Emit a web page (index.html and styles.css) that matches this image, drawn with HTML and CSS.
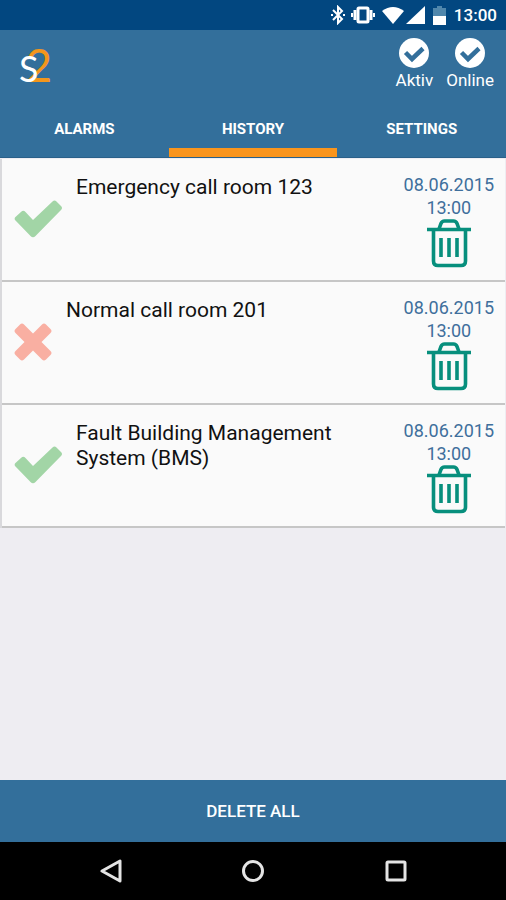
FILE: index.html
```html
<!DOCTYPE html>
<html lang="en">
<head>
<meta charset="utf-8">
<meta name="viewport" content="width=device-width, initial-scale=1">
<title>S2 History</title>
<link rel="stylesheet" href="styles.css">
</head>
<body>
<svg class="defs" aria-hidden="true">
  <symbol id="check" viewBox="0 0 48 38">
    <path d="M2 16.500 7.500 11.500Q9.500 10 11.500 12L19 20 38.500 1.500Q40.500-.5 42.500 1.500L47 6Q49 8 47 10L21.500 36Q19 38.500 16.500 36L1.500 20.500Q-.5 18.500 2 16.500Z"/>
  </symbol>
  <symbol id="cross" viewBox="0 0 38 38">
    <path d="M6 1.500Q8-.5 10 1.500L19 10.500 28 1.500Q30-.5 32 1.500L36.500 6Q38.500 8 36.500 10L27.500 19 36.500 28Q38.500 30 36.500 32L32 36.500Q30 38.500 28 36.500L19 27.500 10 36.500Q8 38.500 6 36.500L1.500 32Q-.5 30 1.500 28L10.500 19 1.500 10Q-.5 8 1.500 6Z"/>
  </symbol>
  <symbol id="trash" viewBox="0 0 44 49">
    <g fill="none" stroke="currentColor" stroke-width="3.600">
      <path d="M0 10.500H44"/>
      <path d="M12 10 14 4.500Q15 2 17.500 2H26.500Q29 2 30 4.500L32 10"/>
      <path d="M6.500 11V42Q6.500 46.500 11 46.500H34Q38.500 46.500 38.500 42V11"/>
      <path d="M14 19V38M22 19V38M30 19V38"/>
    </g>
  </symbol>
  <symbol id="badge" viewBox="0 0 30 30">
    <circle cx="15" cy="15" r="15" fill="#fff"/>
    <path d="M6.500 14.500 13 21 24 10.500" fill="none" stroke="#336f9b" stroke-width="4.500"/>
  </symbol>
</svg>
<div class="screen">
  <div class="status">
    <svg width="14" height="20" viewBox="0 0 14 20" fill="none" stroke="#fff" stroke-width="2"><path d="M2 5 11 14 7 18V2L11 6 2 15"/><path d="M13 9V11M1 9V11"/></svg>
    <svg class="vibrate" width="24" height="18" viewBox="0 0 24 18" fill="none" stroke="#fff"><rect x="7" y="2" width="10" height="14" rx="1" stroke-width="3"/><path d="M4 4V14M20 4V14" stroke-width="3"/><path d="M1 7V11M23 7V11" stroke-width="2"/></svg>
    <svg class="wifi" width="22" height="18" viewBox="0 0 22 18" fill="#fff"><path d="M0 5Q11-3 22 5L11 18Z"/></svg>
    <svg width="19" height="18" viewBox="0 0 19 18" fill="#fff"><path d="M19 0V18H0Z"/></svg>
    <svg class="battery" width="13" height="19" viewBox="0 0 13 19"><path d="M0 2H4V0H9V2H13V11H0Z" fill="#5087ac"/><path d="M0 10H13V19H0Z" fill="#fff"/></svg>
    <span>13:00</span>
  </div>
  <header class="header">
    <div class="logo" aria-label="S2"><span class="logo-s">S</span><span class="logo-2">2</span></div>
    <div class="states">
      <div class="state"><svg width="30" height="30"><use href="#badge"/></svg><span>Aktiv</span></div>
      <div class="state"><svg width="30" height="30"><use href="#badge"/></svg><span>Online</span></div>
    </div>
  </header>
  <nav class="tabs">
    <a href="#alarms">ALARMS</a>
    <a href="#history" class="active" aria-current="page">HISTORY</a>
    <a href="#settings">SETTINGS</a>
  </nav>
  <main class="list">
    <article class="card">
      <svg class="ok" width="48" height="38"><use href="#check"/></svg>
      <h2>Emergency call room 123</h2>
      <div class="side"><time>08.06.2015<br>13:00</time><button type="button" aria-label="Delete"><svg width="44" height="49"><use href="#trash"/></svg></button></div>
    </article>
    <article class="card">
      <svg class="fail" width="38" height="38"><use href="#cross"/></svg>
      <h2>Normal call room 201</h2>
      <div class="side"><time>08.06.2015<br>13:00</time><button type="button" aria-label="Delete"><svg width="44" height="49"><use href="#trash"/></svg></button></div>
    </article>
    <article class="card">
      <svg class="ok" width="48" height="38"><use href="#check"/></svg>
      <h2>Fault Building Management System (BMS)</h2>
      <div class="side"><time>08.06.2015<br>13:00</time><button type="button" aria-label="Delete"><svg width="44" height="49"><use href="#trash"/></svg></button></div>
    </article>
  </main>
  <button type="button" class="delete-all">DELETE ALL</button>
  <div class="navbar">
    <button type="button" aria-label="Back"><svg width="24" height="24" viewBox="0 0 24 24"><path d="M22 2V22L4 12Z"/></svg></button>
    <button type="button" aria-label="Home"><svg width="24" height="24" viewBox="0 0 24 24"><circle cx="12" cy="12" r="9.500"/></svg></button>
    <button type="button" aria-label="Recent apps"><svg width="24" height="24" viewBox="0 0 24 24"><rect x="3" y="3" width="18" height="18" rx="1"/></svg></button>
  </div>
</div>
</body>
</html>
```
FILE: styles.css
```css
* { box-sizing: border-box; }
body { margin: 0; font-family: Roboto, "Liberation Sans", sans-serif; }
button { border: 0; padding: 0; background: none; font: inherit; color: inherit; cursor: pointer; }
svg { display: block; flex: none; }
.defs { position: absolute; width: 0; height: 0; }
.screen { display: flex; flex-direction: column; min-height: 100vh; background: #eeedf2; }

.status { display: flex; align-items: center; justify-content: flex-end; height: 30px; padding-right: 9px; background: #024780; color: #fff; font-size: 17px; font-weight: 500; }
.vibrate { margin-left: 6px; }
.wifi { margin-left: 7px; margin-right: 2px; }
.battery { margin: 0 8px; }

.header { display: flex; justify-content: space-between; height: 70px; padding: 8px 12px 0 19px; background: #336f9b; color: #fff; }
.logo { display: flex; align-items: baseline; height: 54px; font-family: Lato, sans-serif; line-height: 54px; }
.logo-s { position: relative; z-index: 1; font-size: 36px; }
.logo-2 { margin-left: -13px; font-size: 46px; color: #f3961c; }
.states { display: flex; gap: 13px; }
.state { display: flex; flex-direction: column; align-items: center; font-size: 17px; line-height: 24px; }

.tabs { display: grid; grid-template-columns: repeat(3, 1fr); height: 58px; background: #336f9b; border-bottom: 1px solid #2a6089; }
.tabs a { display: flex; align-items: center; justify-content: center; border-top: 9px solid transparent; border-bottom: 9px solid transparent; color: #fff; font-size: 15px; font-weight: 700; text-decoration: none; }
.tabs .active { border-bottom-color: #fa951d; }

.list { flex: 1; padding: 1px 1px 0 2px; }
.card { display: flex; align-items: flex-start; min-height: 123px; padding: 14px 11px 10px 12px; background: #fafafa; border-bottom: 2px solid #c6c6c6; box-shadow: -2px 0 #d9d9dc; }
.card > svg { align-self: center; margin-bottom: 6px; }
.ok { fill: #a2d5a6; }
.fail { fill: #f9afa2; }
.card h2 { flex: 1; max-width: 290px; margin: 2px auto 0 14px; font-size: 21px; line-height: 25px; font-weight: 400; color: #111; }
.side { display: flex; flex-direction: column; align-items: center; margin-left: 12px; }
.side time { text-align: center; font-size: 18px; line-height: 23px; color: #3f6f9c; }
.side button { color: #078f7d; }

.delete-all { height: 62px; background: #336f9b; color: #fff; font-size: 17px; font-weight: 500; }
.navbar { display: flex; justify-content: space-between; align-items: center; height: 58px; padding: 0 98px; background: #000; }
.navbar svg { fill: none; stroke: #e4e4e4; stroke-width: 3; stroke-linejoin: round; }
```
